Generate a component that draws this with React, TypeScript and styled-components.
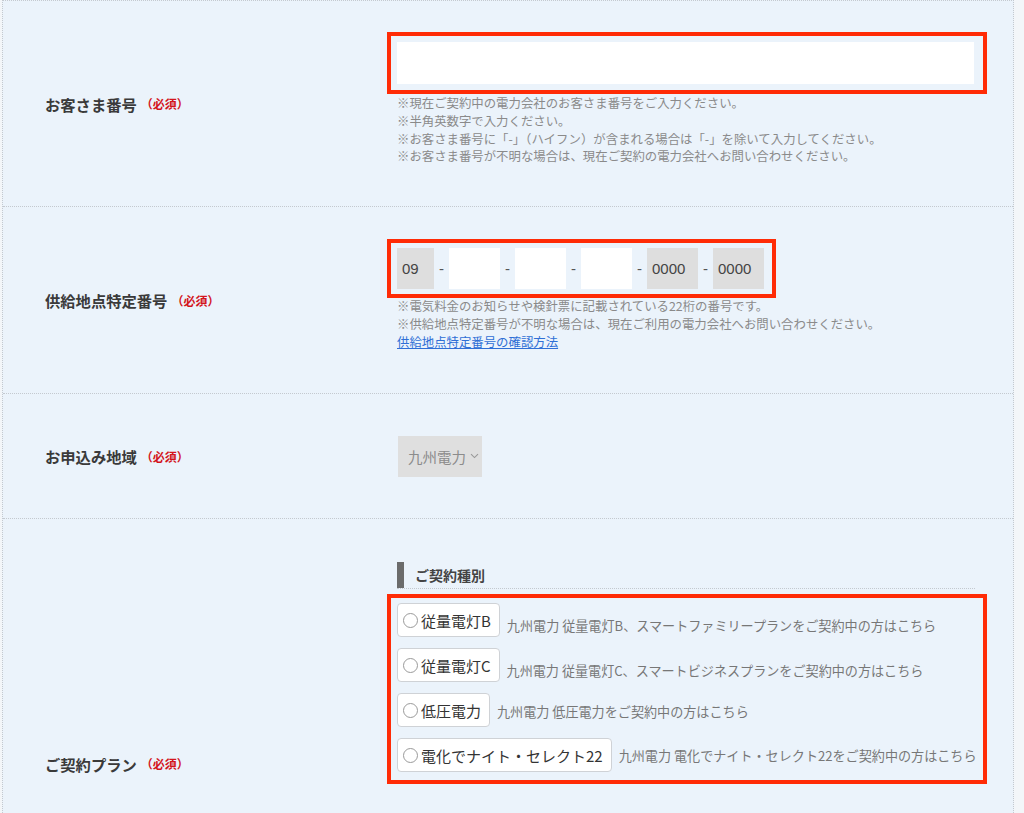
import React from 'react'
import styled, { createGlobalStyle } from 'styled-components'

const GlobalStyle = createGlobalStyle`
  html, body {
    margin: 0;
    padding: 0;
    background: #f3f6f9;
  }
  body {
    font-family: "Noto Sans CJK JP", "Noto Sans", sans-serif;
    color: #333;
  }
`

const Page = styled.div`
  padding: 0 10px 0 2px;
  overflow: hidden;
  height: 813px;
`

const Table = styled.div`
  width: 1012px;
  background: #ebf3fb;
  border-top: 1px dotted #c4c9cf;
  border-left: 1px dotted #c4c9cf;
  border-right: 1px dotted #c4c9cf;
  box-sizing: border-box;
`

const Row = styled.div<{ $height: number }>`
  display: grid;
  grid-template-columns: 384px 1fr;
  height: ${p => p.$height}px;
  border-bottom: 1px dotted #c4c9cf;
  box-sizing: border-box;
`

const LabelCell = styled.div`
  display: flex;
  align-items: center;
  padding-left: 42px;
  font-size: 15.3px;
  font-weight: 700;
  color: #3a3a3a;
`

const Required = styled.span`
  margin-left: 4px;
  font-size: 12px;
  font-weight: 700;
  color: #d3141c;
`

const ValueCell = styled.div<{ $top: number; $center?: boolean }>`
  display: flex;
  flex-direction: column;
  justify-content: ${p => (p.$center ? 'center' : 'flex-start')};
  padding-top: ${p => p.$top}px;
`

const Highlight = styled.div<{ $width?: number; $pad: string; $gap?: number }>`
  border: 4.5px solid #ff2b06;
  box-sizing: border-box;
  width: ${p => (p.$width ? `${p.$width}px` : 'auto')};
  padding: ${p => p.$pad};
  margin-top: ${p => p.$gap ?? 0}px;
`

const TextInput = styled.div`
  height: 42px;
  background: #fff;
`

const Notes = styled.div<{ $top: number }>`
  margin-top: ${p => p.$top}px;
  padding-left: 10px;
  font-size: 12.4px;
  line-height: 17.8px;
  color: #8a8a8a;
`

const HelpLink = styled.a`
  color: #2f6fd6;
  text-decoration: underline;
`

const CodeRow = styled.div`
  display: flex;
  align-items: center;
`

const CodeBox = styled.div<{ $width: number; $filled?: boolean }>`
  width: ${p => p.$width}px;
  height: 41px;
  display: flex;
  align-items: center;
  padding-left: 5px;
  box-sizing: border-box;
  background: ${p => (p.$filled ? '#dedede' : '#fff')};
  font-family: "Liberation Sans", "Noto Sans", sans-serif;
  font-size: 15px;
  color: #444;
`

const Dash = styled.span`
  width: 15px;
  text-align: center;
  font-family: "Liberation Sans", sans-serif;
  font-size: 15px;
  color: #555;
`

const Select = styled.div`
  display: inline-flex;
  align-items: center;
  gap: 4px;
  width: 84px;
  height: 41px;
  margin-left: 11px;
  padding-left: 10px;
  box-sizing: border-box;
  background: #dfdfdf;
  color: #8c8c8c;
  font-size: 14.5px;
`

const SectionTitle = styled.div`
  display: flex;
  align-items: center;
  gap: 11px;
  margin-left: 10px;
  width: 578px;
  height: 27px;
  border-bottom: 1px dotted #c4c9cf;
  font-size: 14px;
  font-weight: 700;
  color: #444;
`

const TitleBar = styled.span`
  width: 7px;
  height: 26px;
  background: #6b6b6b;
`

const PlanList = styled.div`
  display: flex;
  flex-direction: column;
  gap: 11px;
`

const PlanRow = styled.div`
  display: flex;
  align-items: center;
  gap: 7px;
`

const RadioBox = styled.label`
  display: inline-flex;
  align-items: center;
  gap: 3px;
  height: 34px;
  padding: 0 8px 0 5px;
  box-sizing: border-box;
  background: #fff;
  border: 1px solid #cfd2d6;
  border-radius: 4px;
  font-size: 15px;
  color: #333;
  white-space: nowrap;
`

const RadioCircle = styled.span`
  width: 15px;
  height: 15px;
  border: 1px solid #9a9a9a;
  border-radius: 50%;
  box-sizing: border-box;
  background: #fff;
`

const PlanNote = styled.span<{ $shift: number }>`
  font-size: 13.1px;
  color: #777;
  white-space: nowrap;
  margin-top: ${p => p.$shift}px;
`

const plans = [
  { name: '従量電灯B', note: '九州電力 従量電灯B、スマートファミリープランをご契約中の方はこちら', shift: 10 },
  { name: '従量電灯C', note: '九州電力 従量電灯C、スマートビジネスプランをご契約中の方はこちら', shift: 10 },
  { name: '低圧電力', note: '九州電力 低圧電力をご契約中の方はこちら', shift: 2 },
  { name: '電化でナイト・セレクト22', note: '九州電力 電化でナイト・セレクト22をご契約中の方はこちら', shift: 0 },
]

const codeFields = [
  { w: 37, v: '09', filled: true },
  { w: 51, v: '' },
  { w: 51, v: '' },
  { w: 51, v: '' },
  { w: 51, v: '0000', filled: true },
  { w: 51, v: '0000', filled: true },
]

function Label({ children }: { children: React.ReactNode }) {
  return (
    <LabelCell>
      {children}
      <Required>（必須）</Required>
    </LabelCell>
  )
}

export default function App() {
  return (
    <Page>
      <GlobalStyle />
      <Table>
        <Row $height={206}>
          <Label>お客さま番号</Label>
          <ValueCell $top={31}>
            <Highlight $width={600} $pad="6px 9px 6px 6px">
              <TextInput />
            </Highlight>
            <Notes $top={1}>
              ※現在ご契約中の電力会社のお客さま番号をご入力ください。<br />
              ※半角英数字で入力ください。<br />
              ※お客さま番号に「-」（ハイフン）が含まれる場合は「-」を除いて入力してください。<br />
              ※お客さま番号が不明な場合は、現在ご契約の電力会社へお問い合わせください。
            </Notes>
          </ValueCell>
        </Row>

        <Row $height={187}>
          <Label>供給地点特定番号</Label>
          <ValueCell $top={32}>
            <Highlight $width={389} $pad="5px 4px 5px 6px">
              <CodeRow>
                {codeFields.map((f, i) => (
                  <React.Fragment key={i}>
                    {i > 0 && <Dash>-</Dash>}
                    <CodeBox $width={f.w} $filled={f.filled}>{f.v}</CodeBox>
                  </React.Fragment>
                ))}
              </CodeRow>
            </Highlight>
            <Notes $top={0}>
              ※電気料金のお知らせや検針票に記載されている22桁の番号です。<br />
              ※供給地点特定番号が不明な場合は、現在ご利用の電力会社へお問い合わせください。<br />
              <HelpLink href="#">供給地点特定番号の確認方法</HelpLink>
            </Notes>
          </ValueCell>
        </Row>

        <Row $height={125}>
          <Label>お申込み地域</Label>
          <ValueCell $top={0} $center>
            <Select>
              九州電力
              <svg width="9" height="6" viewBox="0 0 9 6">
                <path d="M1 1.2 L4.5 4.6 L8 1.2" fill="none" stroke="#999" strokeWidth="1.1" />
              </svg>
            </Select>
          </ValueCell>
        </Row>

        <Row $height={490}>
          <Label>ご契約プラン</Label>
          <ValueCell $top={42}>
            <SectionTitle>
              <TitleBar />
              ご契約種別
            </SectionTitle>
            <Highlight $width={600} $pad="5px 6px 8px 6px" $gap={5}>
              <PlanList>
                {plans.map(p => (
                  <PlanRow key={p.name}>
                    <RadioBox>
                      <RadioCircle />
                      {p.name}
                    </RadioBox>
                    <PlanNote $shift={p.shift}>{p.note}</PlanNote>
                  </PlanRow>
                ))}
              </PlanList>
            </Highlight>
          </ValueCell>
        </Row>
      </Table>
    </Page>
  )
}
